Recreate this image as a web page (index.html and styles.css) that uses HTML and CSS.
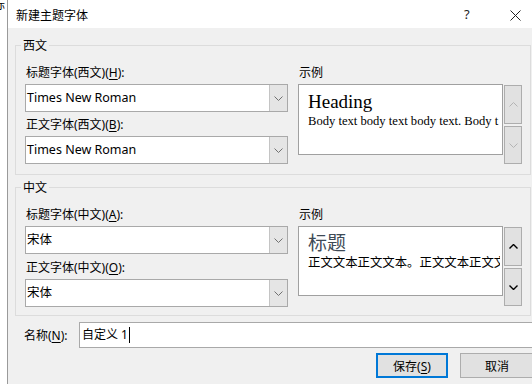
FILE: index.html
```html
<!DOCTYPE html>
<html lang="zh">
<head>
    <meta charset="UTF-8">
    <title>新建主题字体</title>
    <link rel="stylesheet" href="styles.css">
</head>
<body>
    <div class="screen">
        <!-- 对话框后面的窗口，只露出一条边 -->
        <div class="behind"><span class="behind-glyph">标</span></div>

        <div class="dialog">
            <div class="titlebar">
                <span class="title">新建主题字体</span>
                <span class="help">?</span>
                <span class="close">
                    <svg width="11" height="11" viewBox="0 0 11 11"><path d="M0.5 0.5L10.5 10.5M10.5 0.5L0.5 10.5" stroke="#222" stroke-width="1" fill="none"/></svg>
                </span>
            </div>

            <div class="content">
                <fieldset class="group">
                    <legend>西文</legend>
                    <div class="group-row">
                        <div class="fields">
                            <div class="label">标题字体(西文)(<u>H</u>):</div>
                            <div class="combo">
                                <span class="combo-text">Times New Roman</span>
                                <span class="combo-btn"><svg width="9" height="5" viewBox="0 0 9 5"><path d="M0.5 0.5L4.5 4.5L8.5 0.5" stroke="#707070" fill="none"/></svg></span>
                            </div>
                            <div class="label label-second">正文字体(西文)(<u>B</u>):</div>
                            <div class="combo">
                                <span class="combo-text">Times New Roman</span>
                                <span class="combo-btn"><svg width="9" height="5" viewBox="0 0 9 5"><path d="M0.5 0.5L4.5 4.5L8.5 0.5" stroke="#707070" fill="none"/></svg></span>
                            </div>
                        </div>
                        <div class="sample">
                            <div class="label">示例</div>
                            <div class="sample-row">
                                <div class="preview preview-latin">
                                    <div class="preview-heading">Heading</div>
                                    <div class="preview-body">Body text body text body text. Body t</div>
                                </div>
                                <div class="spin">
                                    <div class="spin-btn spin-up disabled"><svg width="9" height="5" viewBox="0 0 9 5"><path d="M0.5 4.5L4.5 0.5L8.5 4.5" stroke="#b4b4b4" fill="none"/></svg></div>
                                    <div class="spin-btn spin-down disabled"><svg width="9" height="5" viewBox="0 0 9 5"><path d="M0.5 0.5L4.5 4.5L8.5 0.5" stroke="#b4b4b4" fill="none"/></svg></div>
                                </div>
                            </div>
                        </div>
                    </div>
                </fieldset>

                <fieldset class="group group-cjk">
                    <legend>中文</legend>
                    <div class="group-row">
                        <div class="fields">
                            <div class="label">标题字体(中文)(<u>A</u>):</div>
                            <div class="combo">
                                <span class="combo-text">宋体</span>
                                <span class="combo-btn"><svg width="9" height="5" viewBox="0 0 9 5"><path d="M0.5 0.5L4.5 4.5L8.5 0.5" stroke="#707070" fill="none"/></svg></span>
                            </div>
                            <div class="label label-second">正文字体(中文)(<u>O</u>):</div>
                            <div class="combo">
                                <span class="combo-text">宋体</span>
                                <span class="combo-btn"><svg width="9" height="5" viewBox="0 0 9 5"><path d="M0.5 0.5L4.5 4.5L8.5 0.5" stroke="#707070" fill="none"/></svg></span>
                            </div>
                        </div>
                        <div class="sample">
                            <div class="label">示例</div>
                            <div class="sample-row">
                                <div class="preview preview-cjk">
                                    <div class="preview-heading">标题</div>
                                    <div class="preview-body">正文文本正文文本。正文文本正文文</div>
                                </div>
                                <div class="spin">
                                    <div class="spin-btn spin-up"><svg width="9" height="5" viewBox="0 0 9 5"><path d="M0.5 4.5L4.5 0.5L8.5 4.5" stroke="#000" stroke-width="1.4" fill="none"/></svg></div>
                                    <div class="spin-btn spin-down"><svg width="9" height="5" viewBox="0 0 9 5"><path d="M0.5 0.5L4.5 4.5L8.5 0.5" stroke="#000" stroke-width="1.4" fill="none"/></svg></div>
                                </div>
                            </div>
                        </div>
                    </div>
                </fieldset>

                <div class="name-row">
                    <span class="name-label">名称(<u>N</u>):</span>
                    <div class="name-input">自定义 1<span class="caret"></span></div>
                </div>

                <div class="buttons">
                    <button class="btn btn-default">保存(<u>S</u>)</button>
                    <button class="btn">取消</button>
                </div>
            </div>
        </div>
    </div>
</body>
</html>
```

FILE: styles.css
```css
* {
    box-sizing: border-box;
}

body {
    margin: 0;
    width: 532px;
    height: 384px;
    overflow: hidden;
    background-color: #fff;
    font-family: "Noto Sans", "Noto Sans CJK SC", sans-serif;
    font-size: 12px;
    color: #000;
}

u {
    text-decoration-thickness: 1px;
    text-underline-offset: 2px;
}

.screen {
    display: flex;
    height: 384px;
}

.behind {
    width: 7px;
    flex: none;
    overflow: hidden;
    background-color: #fff;
}

.behind-glyph {
    display: block;
    margin-left: -7px;
    margin-top: -3px;
    font-family: "Noto Sans CJK SC", sans-serif;
    font-size: 12px;
    line-height: 14px;
}

.dialog {
    flex: 1;
    display: flex;
    flex-direction: column;
    border-left: 1px solid #9a9a9a;
    background-color: #f0f0f0;
}

.titlebar {
    height: 28px;
    flex: none;
    display: flex;
    align-items: center;
    background-color: #fff;
    padding-left: 8px;
}

.title {
    flex: 1;
    line-height: 17px;
    margin-top: 2px;
}

.help {
    width: 12px;
    margin-right: 34px;
    font-size: 13px;
    color: #222;
}

.close {
    display: flex;
    margin-right: 14px;
    margin-top: 2px;
}

.content {
    padding: 9px 4px 0 7px;
}

.group {
    margin: 0;
    border: 1px solid #dcdcdc;
    padding: 0 8px 10px 9px;
}

.group legend {
    margin-left: -4px;
    padding: 0 2px;
    line-height: 17px;
}

.group-cjk {
    margin-top: 4px;
    padding-bottom: 8px;
}

.group-row {
    display: flex;
    gap: 10px;
}

.fields {
    width: 263px;
    flex: none;
}

.label {
    line-height: 17px;
    margin-top: 10px;
    padding-left: 1px;
}

.label-second {
    margin-top: 4px;
}

.group-cjk .label-second {
    margin-top: 5px;
}

.combo {
    display: flex;
    height: 28px;
    margin-top: 3px;
    border: 1px solid #a9a9a9;
    background-color: #fff;
}

.combo-text {
    flex: 1;
    padding-left: 1px;
    font-size: 12.5px;
    line-height: 26px;
}

.combo-btn {
    width: 18px;
    display: flex;
    align-items: center;
    justify-content: center;
    background-color: #e5e5e5;
    border-left: 1px solid #c4c4c4;
}

.sample {
    flex: 1;
}

.sample-row {
    display: flex;
    align-items: flex-start;
    margin-top: 3px;
}

.preview {
    width: 205px;
    height: 71px;
    border: 1px solid #a0a0a0;
    background-color: #fff;
    padding: 6px 2px 0 9px;
    overflow: hidden;
    white-space: nowrap;
}

.preview-cjk {
    height: 70px;
    padding-top: 3px;
}

.preview-latin .preview-heading {
    font-family: "Liberation Serif", serif;
    font-size: 19px;
    line-height: 22px;
}

.preview-latin .preview-body {
    font-family: "Liberation Serif", serif;
    font-size: 12.6px;
    line-height: 16px;
    overflow: hidden;
}

.preview-cjk .preview-heading {
    font-family: "Noto Sans CJK SC", sans-serif;
    font-size: 19px;
    line-height: 24px;
    color: #3e4a56;
}

.preview-cjk .preview-body {
    font-family: "Noto Sans CJK SC", sans-serif;
    font-size: 12.4px;
    line-height: 16px;
    overflow: hidden;
}

.spin {
    display: flex;
    flex-direction: column;
    gap: 2px;
    margin-left: 1px;
    padding-top: 1px;
}

.spin-btn {
    width: 18px;
    height: 39px;
    display: flex;
    align-items: center;
    justify-content: center;
    background-color: #e1e1e1;
    border: 1px solid #adadad;
}

.spin-down {
    height: 38px;
}

.name-row {
    display: flex;
    align-items: center;
    margin-top: 6px;
    margin-right: -3px;
}

.name-label {
    width: 64px;
    padding-left: 9px;
    flex: none;
}

.name-input {
    flex: 1;
    height: 26px;
    border: 1px solid #a9a9a9;
    background-color: #fff;
    padding-left: 2px;
    line-height: 24px;
    display: flex;
    align-items: center;
}

.caret {
    display: inline-block;
    width: 1px;
    height: 16px;
    margin-left: 1px;
    background-color: #000;
}

.buttons {
    display: flex;
    justify-content: flex-end;
    gap: 12px;
    margin-top: 5px;
    margin-right: -3px;
}

.btn {
    width: 74px;
    height: 25px;
    padding: 0;
    font-family: inherit;
    font-size: 12px;
    color: #000;
    background-color: #e1e1e1;
    border: 1px solid #adadad;
}

.btn-default {
    width: 72px;
    border: 2px solid #0078d7;
}
```
